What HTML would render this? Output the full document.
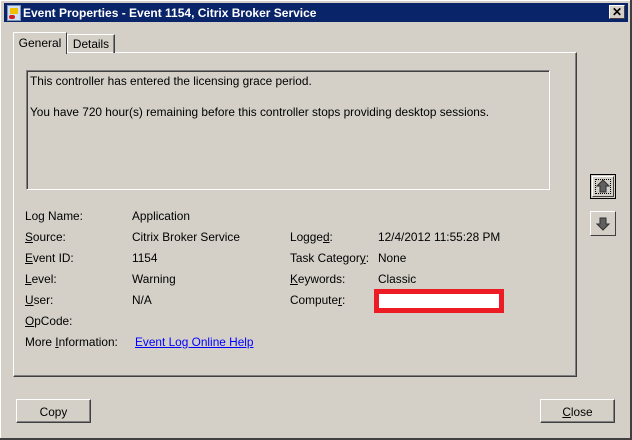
<!DOCTYPE html><html><head><style>
body{margin:0;width:632px;height:440px;background:#d4d0c8;font-family:"Liberation Sans",sans-serif;font-size:11.85px;color:#000;position:relative;overflow:hidden}
.a{position:absolute;white-space:nowrap}
.win{position:absolute;left:0;top:0;width:630px;height:438px;border-right:2px solid #404040;border-bottom:2px solid #404040;box-shadow:inset 1px 1px 0 #fff}
.title{position:absolute;left:4px;top:3px;width:624px;height:19px;background:#0a246a;color:#fff;font-weight:bold;font-size:12px}
.btn{position:absolute;background:#d4d0c8;border:1px solid;border-color:#fff #404040 #404040 #fff;box-shadow:inset -1px -1px 0 #808080;text-align:center;line-height:24px;font-size:11.85px}
u{text-decoration:underline}
</style></head><body>
<div class="win"></div>
<div class="title"><div class="a" style="left:3px;top:2px;width:12px;height:14px;background:#cfe0f5;border:1px solid #7d93b8"><div style="position:absolute;left:2px;top:2px;width:8px;height:6px;background:#f0c000"></div><div style="position:absolute;left:1px;top:9px;width:6px;height:4px;background:#d02020;border-radius:3px"></div></div>
<div class="a" style="left:19px;top:3px">Event Properties - Event 1154, Citrix Broker Service</div>
<div class="a" style="left:605px;top:2px;width:14px;height:12px;background:#d4d0c8;border:1px solid;border-color:#fff #404040 #404040 #fff;color:#000;font-size:12px;line-height:12px;text-align:center">✕</div></div>
<div class="a" style="left:13px;top:52px;width:562px;height:323px;border:1px solid;border-color:#fff #404040 #404040 #fff;box-shadow:inset -1px -1px 0 #808080"></div>
<div class="a" style="left:13px;top:32px;width:52px;height:21px;background:#d4d0c8;border:1px solid;border-color:#fff #404040 transparent #fff;border-bottom:none;padding:0;text-align:center;line-height:20px;font-size:12px">General</div>
<div class="a" style="left:67px;top:34px;width:46px;height:18px;border:1px solid;border-color:#fff #404040 transparent #fff;border-bottom:none;text-align:center;line-height:19px;box-shadow:inset -1px 0 0 #808080">Details</div>
<div class="a" style="left:26px;top:70px;width:522px;height:118px;border:1px solid;border-color:#808080 #fff #fff #808080;box-shadow:inset 1px 1px 0 #404040"></div>
<div class="a" style="left:30px;top:74px">This controller has entered the licensing grace period.</div>
<div class="a" style="left:30px;top:105px">You have 720 hour(s) remaining before this controller stops providing desktop sessions.</div>
<div class="a" style="left:25px;top:209px">Log Name:</div><div class="a" style="left:132px;top:209px">Application</div>
<div class="a" style="left:25px;top:230px"><u>S</u>ource:</div><div class="a" style="left:132px;top:230px">Citrix Broker Service</div>
<div class="a" style="left:25px;top:251px"><u>E</u>vent ID:</div><div class="a" style="left:132px;top:251px">1154</div>
<div class="a" style="left:25px;top:272px"><u>L</u>evel:</div><div class="a" style="left:132px;top:272px">Warning</div>
<div class="a" style="left:25px;top:293px"><u>U</u>ser:</div><div class="a" style="left:132px;top:293px">N/A</div>
<div class="a" style="left:25px;top:314px"><u>O</u>pCode:</div>
<div class="a" style="left:25px;top:335px">More <u>I</u>nformation:</div><div class="a" style="left:135px;top:335px;color:#0000ff;text-decoration:underline">Event Log Online Help</div>
<div class="a" style="left:290px;top:230px">Logge<u>d</u>:</div><div class="a" style="left:378px;top:230px">12/4/2012 11:55:28 PM</div>
<div class="a" style="left:290px;top:251px">Task Categor<u>y</u>:</div><div class="a" style="left:378px;top:251px">None</div>
<div class="a" style="left:290px;top:272px"><u>K</u>eywords:</div><div class="a" style="left:378px;top:272px">Classic</div>
<div class="a" style="left:290px;top:293px">Compute<u>r</u>:</div>
<div class="a" style="left:374px;top:289px;width:120px;height:14px;background:#fff;border:5px solid #ed1c24"></div>
<div class="a" style="left:590px;top:174px;width:24px;height:23px;border:1px solid #000"><div style="position:absolute;left:1px;top:1px;width:20px;height:19px;border:1px solid;border-color:#fff #404040 #404040 #fff;outline:1px dotted #000;outline-offset:-4px"></div>
<svg class="a" style="left:5px;top:4px" width="14" height="14"><path d="M7 1L13 7H10V13H4V7H1Z" fill="#606060" stroke="#303030"/></svg></div>
<div class="a" style="left:590px;top:211px;width:24px;height:23px;border:1px solid;border-color:#fff #404040 #404040 #fff"><svg class="a" style="left:5px;top:5px" width="14" height="14"><path d="M4 1H10V7H13L7 13L1 7H4Z" fill="#606060" stroke="#303030"/></svg></div>
<div class="btn" style="left:16px;top:399px;width:73px;height:22px">Copy</div>
<div class="btn" style="left:540px;top:399px;width:73px;height:22px"><u>C</u>lose</div>
</body></html>
